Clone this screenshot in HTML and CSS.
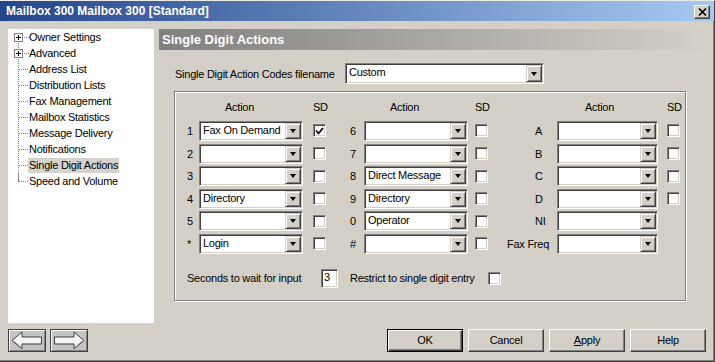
FILE: index.html
```html
<!DOCTYPE html>
<html lang="en">
<head>
    <meta charset="UTF-8">
    <title>Mailbox 300 Mailbox 300 [Standard]</title>
    <link rel="stylesheet" href="styles.css">
</head>
<body>
<div class="window">
    <div class="titlebar">
        <span class="title">Mailbox 300 Mailbox 300 [Standard]</span>
        <div class="close-btn">
            <svg width="9" height="8" viewBox="0 0 9 8"><path d="M1 0.5 L8 7.5 M8 0.5 L1 7.5" stroke="#000" stroke-width="1.6"/></svg>
        </div>
    </div>

    <div class="main">
        <!-- settings tree -->
        <ul class="tree">
            <li class="node"><span class="plus"></span><span class="label">Owner Settings</span></li>
            <li class="node"><span class="plus"></span><span class="label">Advanced</span></li>
            <li class="leaf"><span class="label">Address List</span></li>
            <li class="leaf"><span class="label">Distribution Lists</span></li>
            <li class="leaf"><span class="label">Fax Management</span></li>
            <li class="leaf"><span class="label">Mailbox Statistics</span></li>
            <li class="leaf"><span class="label">Message Delivery</span></li>
            <li class="leaf"><span class="label">Notifications</span></li>
            <li class="leaf selected"><span class="label">Single Digit Actions</span></li>
            <li class="leaf last"><span class="label">Speed and Volume</span></li>
        </ul>

        <div class="pane">
            <div class="pane-head">Single Digit Actions</div>

            <div class="file-row">
                <span class="file-label">Single Digit Action Codes filename</span>
                <div class="combo file-combo"><span class="combo-text">Custom</span><span class="combo-btn"></span></div>
            </div>

            <div class="group">
                <div class="grid">
                    <span></span><span class="head">Action</span><span class="head sd1">SD</span>
                    <span></span><span class="head">Action</span><span class="head sd2">SD</span>
                    <span></span><span class="head act3">Action</span><span class="head sd3">SD</span>

                    <span class="key k1">1</span>
                    <div class="combo"><span class="combo-text">Fax On Demand</span><span class="combo-btn"></span></div>
                    <span class="check c1 checked"><svg width="9" height="8" viewBox="0 0 9 8"><path d="M1 3.5 L3.5 6.5 L8 1" fill="none" stroke="#000" stroke-width="1.7"/></svg></span>
                    <span class="key k2">6</span>
                    <div class="combo"><span class="combo-text"></span><span class="combo-btn"></span></div>
                    <span class="check c2"></span>
                    <span class="key k3">A</span>
                    <div class="combo"><span class="combo-text"></span><span class="combo-btn"></span></div>
                    <span class="check c3"></span>

                    <span class="key k1">2</span>
                    <div class="combo"><span class="combo-text"></span><span class="combo-btn"></span></div>
                    <span class="check c1"></span>
                    <span class="key k2">7</span>
                    <div class="combo"><span class="combo-text"></span><span class="combo-btn"></span></div>
                    <span class="check c2"></span>
                    <span class="key k3">B</span>
                    <div class="combo"><span class="combo-text"></span><span class="combo-btn"></span></div>
                    <span class="check c3"></span>

                    <span class="key k1">3</span>
                    <div class="combo"><span class="combo-text"></span><span class="combo-btn"></span></div>
                    <span class="check c1"></span>
                    <span class="key k2">8</span>
                    <div class="combo"><span class="combo-text">Direct Message</span><span class="combo-btn"></span></div>
                    <span class="check c2"></span>
                    <span class="key k3">C</span>
                    <div class="combo"><span class="combo-text"></span><span class="combo-btn"></span></div>
                    <span class="check c3"></span>

                    <span class="key k1">4</span>
                    <div class="combo"><span class="combo-text">Directory</span><span class="combo-btn"></span></div>
                    <span class="check c1"></span>
                    <span class="key k2">9</span>
                    <div class="combo"><span class="combo-text">Directory</span><span class="combo-btn"></span></div>
                    <span class="check c2"></span>
                    <span class="key k3">D</span>
                    <div class="combo"><span class="combo-text"></span><span class="combo-btn"></span></div>
                    <span class="check c3"></span>

                    <span class="key k1">5</span>
                    <div class="combo"><span class="combo-text"></span><span class="combo-btn"></span></div>
                    <span class="check c1"></span>
                    <span class="key k2">0</span>
                    <div class="combo"><span class="combo-text">Operator</span><span class="combo-btn"></span></div>
                    <span class="check c2"></span>
                    <span class="key k3">NI</span>
                    <div class="combo"><span class="combo-text"></span><span class="combo-btn"></span></div>
                    <span></span>

                    <span class="key k1">*</span>
                    <div class="combo"><span class="combo-text">Login</span><span class="combo-btn"></span></div>
                    <span class="check c1"></span>
                    <span class="key k2">#</span>
                    <div class="combo"><span class="combo-text"></span><span class="combo-btn"></span></div>
                    <span class="check c2"></span>
                    <span class="key k3 fax">Fax Freq</span>
                    <div class="combo"><span class="combo-text"></span><span class="combo-btn"></span></div>
                    <span></span>
                </div>

                <div class="wait-row">
                    <span class="wait-label">Seconds to wait for input</span>
                    <span class="num-box">3</span>
                    <span class="restrict-label">Restrict to single digit entry</span>
                    <span class="check"></span>
                </div>
            </div>
        </div>
    </div>

    <div class="footer">
        <div class="nav">
            <div class="nav-btn">
                <svg width="32" height="19" viewBox="0 0 32 19"><polygon points="1,9.5 11,1 11,6 30.5,6 30.5,13 11,13 11,18" fill="#f4f4f4" stroke="#404040"/><path d="M11 12.5 L30 12.5 M2.5 10 L11 17" stroke="#909090"/></svg>
            </div>
            <div class="nav-btn">
                <svg width="32" height="19" viewBox="0 0 32 19"><polygon points="31,9.5 21,1 21,6 1.5,6 1.5,13 21,13 21,18" fill="#f4f4f4" stroke="#404040"/><path d="M2 12.5 L21 12.5 M29.5 10 L21 17" stroke="#909090"/></svg>
            </div>
        </div>
        <div class="actions">
            <div class="btn default">OK</div>
            <div class="btn">Cancel</div>
            <div class="btn"><u>A</u>pply</div>
            <div class="btn">Help</div>
        </div>
    </div>
</div>
</body>
</html>
```

FILE: styles.css
```css
* {
    box-sizing: border-box;
}
html, body {
    margin: 0;
    padding: 0;
}
body {
    width: 715px;
    height: 362px;
    overflow: hidden;
    background: #d4d0c8;
    font-family: "Liberation Sans", Arial, sans-serif;
    font-size: 11px;
    letter-spacing: -0.25px;
    color: #000;
}
.window {
    width: 715px;
    height: 362px;
    display: flex;
    flex-direction: column;
    border-top: 1px solid #ecebe7;
    border-right: 1px solid #404040;
    border-bottom: 1px solid #404040;
    box-shadow: inset -1px -1px 0 #808080;
}

/* title bar */
.titlebar {
    height: 20px;
    flex: none;
    display: flex;
    align-items: center;
    justify-content: space-between;
    padding: 0 4px 0 6px;
    background: linear-gradient(to right, #24448c, #a6caf0);
}
.title {
    color: #fff;
    font-weight: bold;
    font-size: 12px;
    letter-spacing: 0;
}
.close-btn {
    width: 16px;
    height: 14px;
    margin-top: 2px;
    display: flex;
    align-items: center;
    justify-content: center;
    background: #d4d0c8;
    border: 1px solid;
    border-color: #fff #404040 #404040 #fff;
    box-shadow: inset -1px -1px 0 #808080;
}

/* main area */
.main {
    display: flex;
    gap: 5px;
    padding: 8px 0 0 8px;
    flex: none;
}
.tree {
    list-style: none;
    margin: 0;
    padding: 0;
    width: 146px;
    height: 294px;
    background: #fff;
    position: relative;
}
.tree::before {
    content: "";
    position: absolute;
    left: 10px;
    top: 12px;
    height: 141px;
    border-left: 1px dotted #808080;
}
.tree li {
    height: 16px;
    line-height: 16px;
    padding-left: 20px;
    position: relative;
}
.tree li.leaf::before {
    content: "";
    position: absolute;
    left: 11px;
    top: 8px;
    width: 9px;
    border-top: 1px dotted #808080;
}
.tree li.last::after {
    content: "";
    position: absolute;
    left: 10px;
    top: 0;
    height: 8px;
    border-left: 1px dotted #808080;
}
.plus {
    position: absolute;
    left: 6px;
    top: 4px;
    width: 9px;
    height: 9px;
    background: #fff;
    border: 1px solid #808080;
}
.plus::before {
    content: "";
    position: absolute;
    left: 1px;
    top: 3px;
    width: 5px;
    height: 1px;
    background: #000;
}
.plus::after {
    content: "";
    position: absolute;
    left: 3px;
    top: 1px;
    width: 1px;
    height: 5px;
    background: #000;
}
.node .label::before {
    content: "";
    display: inline-block;
    width: 5px;
    vertical-align: middle;
    margin: 0 0 1px -5px;
    border-top: 1px dotted #808080;
}
.tree .label {
    padding: 1px 1px 2px;
}
.tree .selected .label {
    background: #d6d3cd;
}

/* right pane */
.pane {
    width: 549px;
}
.pane-head {
    height: 21px;
    line-height: 21px;
    padding-left: 3px;
    color: #fff;
    font-weight: bold;
    font-size: 13px;
    letter-spacing: 0;
    background: linear-gradient(to right, #808080, #d4d0c8);
}
.file-row {
    display: flex;
    align-items: center;
    margin-top: 13px;
    padding-left: 16px;
}
.file-label {
    width: 170px;
}
.file-combo {
    width: 199px;
    height: 21px !important;
}

/* combo box */
.combo {
    height: 20px;
    display: flex;
    padding: 1px;
    background: #fff;
    border: 1px solid;
    border-color: #808080 #fff #fff #808080;
    box-shadow: inset 1px 1px 0 #404040, inset -1px -1px 0 #d4d0c8;
}
.combo-text {
    flex: 1;
    padding-left: 2px;
    line-height: 15px;
    white-space: nowrap;
    overflow: hidden;
}
.combo-btn {
    width: 16px;
    display: flex;
    align-items: center;
    justify-content: center;
    background: #d4d0c8;
    border: 1px solid;
    border-color: #d4d0c8 #404040 #404040 #d4d0c8;
    box-shadow: inset 1px 1px 0 #fff, inset -1px -1px 0 #808080;
}
.combo-btn::after {
    content: "";
    width: 0;
    height: 0;
    border-style: solid;
    border-width: 4px 3.5px 0;
    border-color: #000 transparent transparent;
}

/* check box */
.check {
    width: 13px;
    height: 13px;
    display: flex;
    align-items: center;
    justify-content: center;
    background: #fff;
    border: 1px solid;
    border-color: #808080 #fff #fff #808080;
    box-shadow: inset 1px 1px 0 #404040, inset -1px -1px 0 #d4d0c8;
}

/* group box */
.group {
    width: 512px;
    height: 210px;
    margin: 7px 0 0 15px;
    border: 1px solid #808080;
    box-shadow: inset 1px 1px 0 #fff, 1px 1px 0 #fff;
}
.grid {
    display: grid;
    grid-template-columns: 24px 104px 23px 38px 104px 20px 69px 101px 22px;
    grid-template-rows: 17px repeat(6, 20px);
    row-gap: 2.6px;
    padding-top: 9.4px;
    align-items: center;
}
.head {
    align-self: start;
    line-height: 13px;
    padding-left: 26px;
}
.act3 {
    padding-left: 28px;
}
.sd1 { padding-left: 10px; }
.sd2 { padding-left: 7px; }
.sd3 { padding-left: 9px; }
.k1 { padding-left: 12px; }
.k2 { padding-left: 24px; }
.k3 { padding-left: 47px; white-space: nowrap; }
.k3.fax { padding-left: 19px; }
.check.c1 { margin-left: 10px; }
.check.c2 { margin-left: 7px; }
.check.c3 { margin-left: 9px; }

.wait-row {
    display: flex;
    align-items: center;
    margin-top: 15px;
    padding-left: 12px;
    height: 19px;
}
.wait-label {
    width: 134px;
}
.num-box {
    width: 17px;
    height: 19px;
    line-height: 15px;
    padding-left: 2px;
    background: #fff;
    border: 1px solid;
    border-color: #808080 #fff #fff #808080;
    box-shadow: inset 1px 1px 0 #404040, inset -1px -1px 0 #d4d0c8;
}
.restrict-label {
    width: 138px;
    margin-left: 12px;
}

/* footer buttons */
.footer {
    display: flex;
    justify-content: space-between;
    padding: 6px 8px 0 8px;
}
.nav {
    display: flex;
    gap: 4px;
}
.nav-btn {
    width: 38px;
    height: 23px;
    display: flex;
    align-items: center;
    justify-content: center;
    background: #c4c4c4;
    border: 1px solid #404040;
    box-shadow: inset 1px 1px 0 #fff, inset -1px -1px 0 #808080;
}
.actions {
    display: flex;
    gap: 5px;
}
.btn {
    width: 76px;
    height: 23px;
    line-height: 21px;
    text-align: center;
    background: #d4d0c8;
    border: 1px solid;
    border-color: #fff #404040 #404040 #fff;
    box-shadow: inset -1px -1px 0 #808080;
}
.btn.default {
    border: 1px solid #000;
    box-shadow: inset 1px 1px 0 #fff, inset -1px -1px 0 #404040, inset -2px -2px 0 #808080;
}
```
